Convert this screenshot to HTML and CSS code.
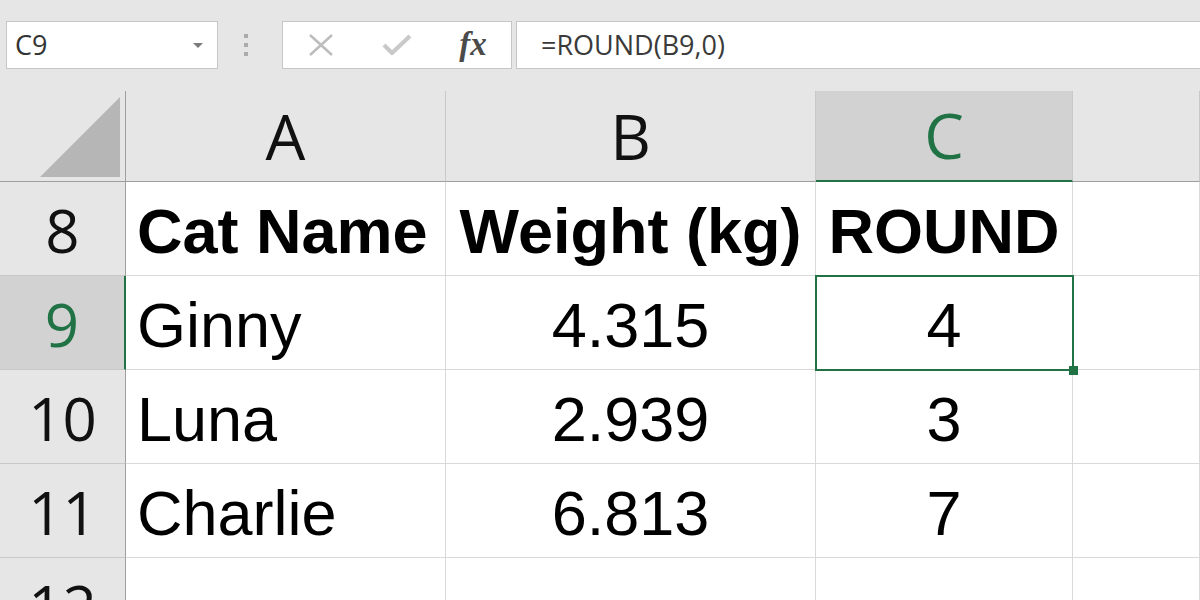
FILE: index.html
```html
<!DOCTYPE html>
<html lang="en">
<head>
<meta charset="utf-8">
<title>Excel ROUND</title>
<link rel="stylesheet" href="styles.css">
</head>
<body>
<div class="app">
  <div class="fbar">
    <div class="namebox"><span class="nb-text">C9</span><span class="nb-arrow"></span></div>
    <div class="grip"><i></i><i></i><i></i></div>
    <div class="fnbox">
      <span class="fn-slot">
        <svg width="26" height="22" viewBox="0 0 26 22"><path d="M2 1 L24 21 M24 1 L2 21" stroke="#bdbdbd" stroke-width="2.6" fill="none"/></svg>
      </span>
      <span class="fn-slot">
        <svg width="30" height="24" viewBox="0 0 30 24"><path d="M2 12 L10 20 L28 3" stroke="#c9c9c9" stroke-width="4.2" fill="none" stroke-linejoin="round"/></svg>
      </span>
      <span class="fn-slot fx">fx</span>
    </div>
    <div class="formula">=ROUND(B9,0)</div>
  </div>
  <div class="sheet">
    <div class="corner"><svg width="80" height="80" viewBox="0 0 80 80"><path d="M80 0 L80 80 L0 80 Z" fill="#b6b6b6"/></svg></div>
    <div class="colh">A</div>
    <div class="colh">B</div>
    <div class="colh sel">C</div>
    <div class="colh"></div>

    <div class="rowh">8</div>
    <div class="cell left bold">Cat Name</div>
    <div class="cell bold">Weight (kg)</div>
    <div class="cell bold">ROUND</div>
    <div class="cell"></div>

    <div class="rowh sel">9</div>
    <div class="cell left">Ginny</div>
    <div class="cell">4.315</div>
    <div class="cell active">4<span class="selbox"><span class="handle"></span></span></div>
    <div class="cell"></div>

    <div class="rowh">10</div>
    <div class="cell left">Luna</div>
    <div class="cell">2.939</div>
    <div class="cell">3</div>
    <div class="cell"></div>

    <div class="rowh">11</div>
    <div class="cell left">Charlie</div>
    <div class="cell">6.813</div>
    <div class="cell">7</div>
    <div class="cell"></div>

    <div class="rowh">12</div>
    <div class="cell"></div>
    <div class="cell"></div>
    <div class="cell"></div>
    <div class="cell"></div>
  </div>
</div>
</body>
</html>
```

FILE: styles.css
```css
* { box-sizing: border-box; }
html, body { margin: 0; padding: 0; }
body { width: 1200px; height: 600px; overflow: hidden; background: #e6e6e6; }

.app { width: 1200px; height: 600px; display: flex; flex-direction: column; }

.fbar {
  height: 91px;
  flex: none;
  display: flex;
  align-items: flex-start;
  padding: 21px 0 0 6px;
  background: #e6e6e6;
  font-family: "Open Sans", "Noto Sans", sans-serif;
}
.namebox {
  width: 212px;
  height: 48px;
  background: #fff;
  border: 1px solid #c6c6c6;
  display: flex;
  align-items: center;
  justify-content: space-between;
  padding: 0 14px 0 8px;
}
.nb-text { font-size: 27px; color: #333; line-height: 1; padding-bottom: 2px; }
.nb-arrow {
  width: 0; height: 0;
  border-left: 5px solid transparent;
  border-right: 5px solid transparent;
  border-top: 5px solid #7a7a7a;
}
.grip {
  width: 64px;
  height: 48px;
  display: flex;
  flex-direction: column;
  align-items: center;
  justify-content: center;
  gap: 5px;
  padding-right: 8px;
}
.grip i { display: block; width: 4px; height: 4px; background: #ababab; }
.fnbox {
  width: 230px;
  height: 48px;
  background: #fff;
  border: 1px solid #c6c6c6;
  display: flex;
  align-items: center;
}
.fn-slot { width: 76px; display: flex; justify-content: center; align-items: center; }
.fn-slot svg { display: block; }
.fx {
  font-family: "Liberation Serif", "DejaVu Serif", serif;
  font-style: italic;
  font-weight: bold;
  font-size: 33px;
  color: #4a4a4a;
  line-height: 1;
  padding-bottom: 2px;
}
.formula {
  flex: 1;
  height: 48px;
  margin-left: 4px;
  background: #fff;
  border: 1px solid #c6c6c6;
  border-right: none;
  display: flex;
  align-items: center;
  padding: 0 0 2px 24px;
  font-size: 27px;
  color: #3a3a3a;
}

.sheet {
  flex: 1;
  overflow: hidden;
  display: grid;
  grid-template-columns: 126px 320px 370px 257px 1fr;
  grid-template-rows: 91px 94px 94px 94px 94px 94px;
  background: #fff;
}
.corner {
  background: #e6e6e6;
  border-right: 1px solid #9e9e9e;
  border-bottom: 1px solid #9e9e9e;
  display: flex;
  justify-content: flex-end;
  align-items: flex-end;
  padding: 0 5px 4px 0;
}
.corner svg { display: block; }
.colh {
  background: #e6e6e6;
  border-right: 1px solid #c8c8c8;
  border-bottom: 1px solid #9e9e9e;
  display: flex;
  align-items: center;
  justify-content: center;
  font-family: "Open Sans", "Noto Sans", sans-serif;
  font-size: 63px;
  color: #111;
  line-height: 1;
  padding-bottom: 2px;
}
.colh.sel {
  background: #d2d2d2;
  color: #217346;
  border-bottom: 2px solid #217346;
}
.rowh {
  background: #e6e6e6;
  border-right: 1px solid #9e9e9e;
  border-bottom: 1px solid #c8c8c8;
  display: flex;
  align-items: center;
  justify-content: center;
  font-family: "Open Sans", "Noto Sans", sans-serif;
  font-size: 60px;
  color: #111;
  line-height: 1;
  padding-top: 2px;
}
.rowh.sel {
  background: #d2d2d2;
  color: #217346;
  border-right: 2px solid #217346;
}
.cell {
  position: relative;
  border-right: 1px solid #d9d9d9;
  border-bottom: 1px solid #d9d9d9;
  display: flex;
  align-items: center;
  justify-content: center;
  font-family: "Liberation Sans", Arial, sans-serif;
  font-size: 63px;
  color: #000;
  line-height: 1;
  padding-top: 6px;
  white-space: nowrap;
}
.cell.left { justify-content: flex-start; padding-left: 11px; }
.cell.bold { font-weight: bold; }
.cell.active { z-index: 2; }
.selbox {
  position: absolute;
  top: -1px;
  left: -1px;
  right: -2px;
  bottom: -2px;
  border: 2px solid #217346;
}
.handle {
  position: absolute;
  right: -6px;
  bottom: -6px;
  width: 9px;
  height: 9px;
  background: #217346;
}
```
